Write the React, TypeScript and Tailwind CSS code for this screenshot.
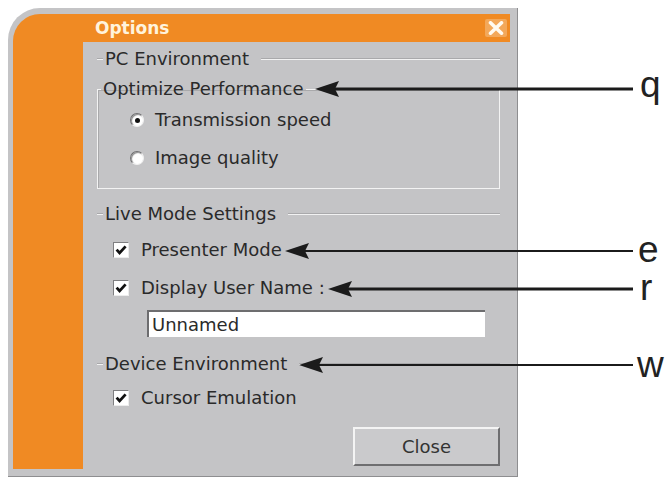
import React from 'react';

const uiFont = { fontFamily: '"DejaVu Sans", "Liberation Sans", sans-serif' };

const Section: React.FC<{ label: string; className?: string }> = ({ label, className = '' }) => (
  <div className={`flex h-[34px] items-center ${className}`}>
    <div className="h-[2px] w-[6px] border-t border-[#a9a9ab] bg-[#f2f2f2]" />
    <span className="ml-[2px] text-[18px] leading-[20px] text-[#2a2a2a]">{label}</span>
    <div className="ml-[12px] h-[2px] flex-1 border-t border-[#a9a9ab] bg-[#f2f2f2]" />
  </div>
);

const Radio: React.FC<{ label: string; checked?: boolean }> = ({ label, checked }) => (
  <div className="flex h-[38px] items-center pl-[32px]">
    <div className="flex h-[14px] w-[14px] items-center justify-center rounded-full border border-[#6f6f71] border-b-[#f0f0f0] border-r-[#f0f0f0] bg-white shadow-[inset_1px_1px_1px_#8a8a8a]">
      {checked && <div className="h-[5px] w-[5px] rounded-full bg-[#111]" />}
    </div>
    <span className="ml-[11px] text-[18px] leading-[20px] text-[#2a2a2a]">{label}</span>
  </div>
);

const Check: React.FC<{ label: string; className?: string }> = ({ label, className = 'h-[38px]' }) => (
  <div className={`flex items-center pl-[16px] ${className}`}>
    <div className="flex h-[16px] w-[16px] items-center justify-center border border-[#7f7f81] border-b-[#ececec] border-r-[#ececec] bg-white">
      <svg width="12" height="12" viewBox="0 0 12 12">
        <path d="M1.6 5.6 L4.6 8.9 L10.6 2.4" fill="none" stroke="#111" strokeWidth="2.8" />
      </svg>
    </div>
    <span className="ml-[12px] text-[18px] leading-[20px] text-[#2a2a2a]">{label}</span>
  </div>
);

const callouts = [
  { y: 89, tip: 315, end: 633, w: 3, letter: 'q', lx: 640, top: 66 },
  { y: 251, tip: 285, end: 633, w: 2, letter: 'e', lx: 638, top: 231 },
  { y: 289, tip: 328, end: 633, w: 3, letter: 'r', lx: 640, top: 269 },
  { y: 365, tip: 299, end: 633, w: 2, letter: 'w', lx: 637, top: 346 },
];

export default function App() {
  return (
    <div className="relative h-[479px] w-[668px] overflow-hidden bg-white" style={uiFont}>
      <div className="ml-[8px] mt-[8px] h-[469px] w-[510px] rounded-tl-[32px] border-b border-r border-[#8e8e90] bg-[#c4c4c6] pb-[7px] pl-[5px] pr-[7px] pt-[6px]">
        <div className="flex h-full flex-col rounded-tl-[27px] bg-[#f08a23]">
          <div className="flex h-[28px] items-center justify-between pl-[82px] pr-[3px]">
            <span className="text-[17px] font-bold leading-[20px] text-[#fff3dc]">Options</span>
            <div className="flex h-[18px] w-[22px] items-center justify-center rounded-[2px] bg-[#f3a85a]">
              <svg width="16" height="14" viewBox="0 0 16 14">
                <path d="M2.5 1.8 L13.5 12.2 M13.5 1.8 L2.5 12.2" stroke="#fffaf0" strokeWidth="3.6" strokeLinecap="round" />
              </svg>
            </div>
          </div>
          <div className="flex flex-1">
            <div className="w-[70px]" />
            <div className="flex flex-1 flex-col bg-[#c4c4c6] pl-[14px] pr-[10px]">
              <Section label="PC Environment" />

              <fieldset className="mt-[3px] border border-[#f3f3f3] pb-[11px] pt-[2px] shadow-[inset_1px_1px_0_#a9a9ab]">
                <legend className="ml-[3px] px-[2px] text-[18px] leading-[20px] text-[#2a2a2a]">Optimize Performance</legend>
                <Radio label="Transmission speed" checked />
                <Radio label="Image quality" />
              </fieldset>

              <Section label="Live Mode Settings" className="mt-[8px]" />
              <Check label="Presenter Mode" />
              <Check label="Display User Name :" />

              <div className="ml-[50px] mt-[3px] flex h-[27px] w-[338px] items-center border-l-2 border-t-2 border-[#6d6d6f] border-b-[#ededed] border-r-[#ededed] bg-white pl-[3px]">
                <span className="text-[18px] leading-[20px] text-[#2a2a2a]">Unnamed</span>
              </div>

              <Section label="Device Environment" className="mt-[10px]" />
              <Check label="Cursor Emulation" className="h-[34px]" />

              <div className="mt-[12px] flex justify-end">
                <button className="flex h-[39px] w-[147px] items-center justify-center border-2 border-[#f4f4f4] border-b-[#6e6e70] border-r-[#6e6e70] bg-[#cacacc] text-[18px] leading-[20px] text-[#333]">
                  Close
                </button>
              </div>
            </div>
          </div>
        </div>
      </div>

      <svg className="pointer-events-none absolute left-0 top-0" width="668" height="479">
        {callouts.map((c) => (
          <g key={c.letter}>
            <line x1={c.tip + 18} y1={c.y} x2={c.end} y2={c.y} stroke="#1b1b1b" strokeWidth={c.w} />
            <polygon
              points={`${c.tip},${c.y} ${c.tip + 24},${c.y - 8} ${c.tip + 20},${c.y} ${c.tip + 24},${c.y + 8}`}
              fill="#1b1b1b"
            />
          </g>
        ))}
      </svg>
      {callouts.map((c) => (
        <span
          key={c.letter}
          className="absolute text-[37px] leading-none text-[#222]"
          style={{ left: c.lx, top: c.top, fontFamily: '"Liberation Sans", Arial, sans-serif' }}
        >
          {c.letter}
        </span>
      ))}
    </div>
  );
}
